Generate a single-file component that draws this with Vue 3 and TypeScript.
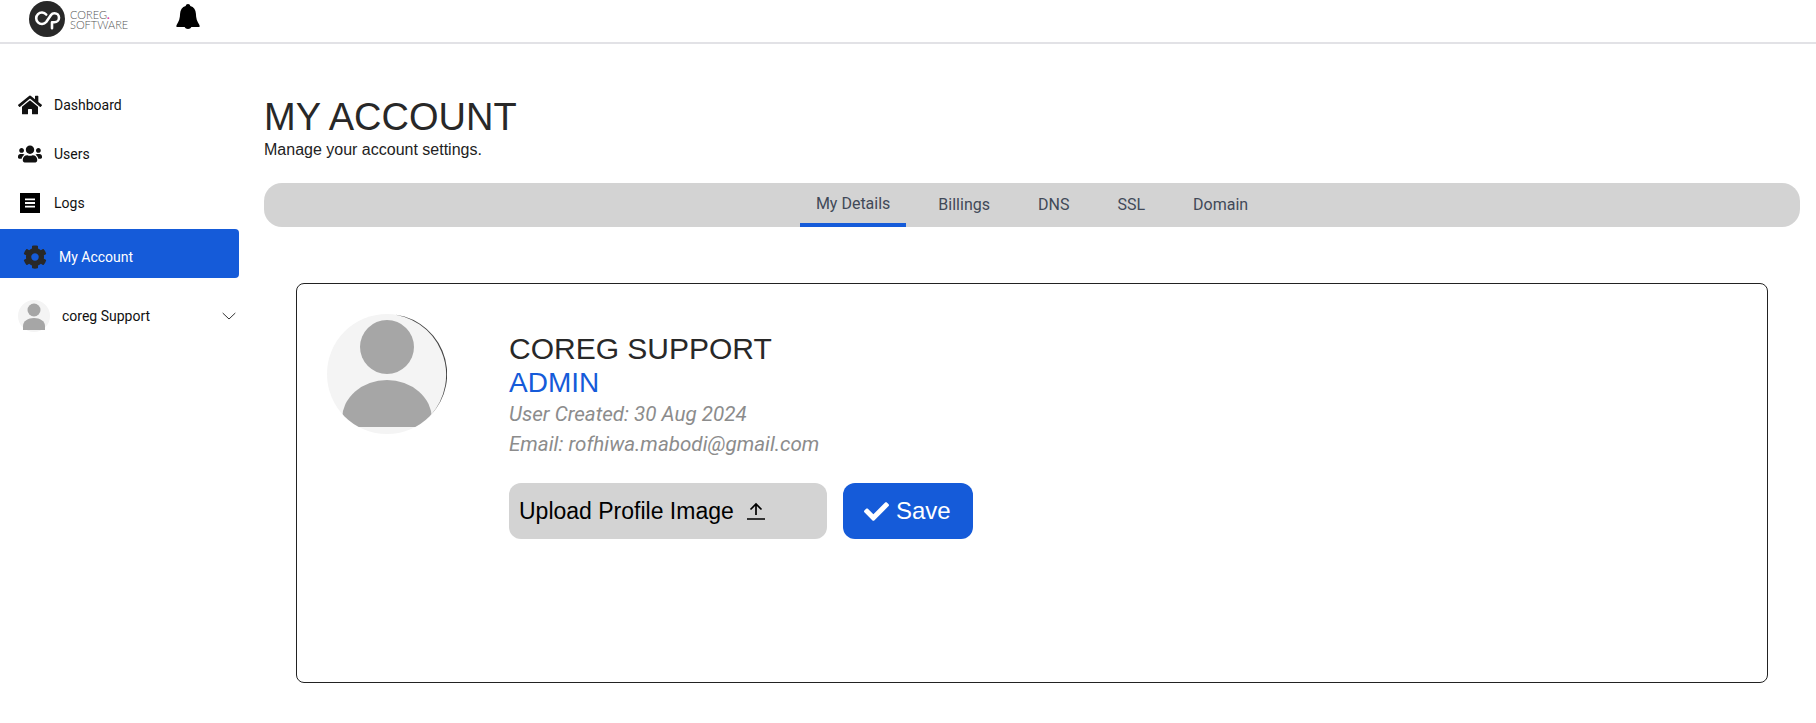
<script setup lang="ts">
import { ref } from "vue";

const navItems = [
  {
    label: "Dashboard",
    box: "0 0 576 512",
    d: "M280.37 148.26L96 300.11V464a16 16 0 0 0 16 16l112.06-.29a16 16 0 0 0 15.92-16V368a16 16 0 0 1 16-16h64a16 16 0 0 1 16 16v95.64a16 16 0 0 0 16 16.05L464 480a16 16 0 0 0 16-16V300L295.67 148.26a12.19 12.19 0 0 0-15.3 0zM571.6 251.47L488 182.56V44.05a12 12 0 0 0-12-12h-56a12 12 0 0 0-12 12v72.61L318.47 43a48 48 0 0 0-61 0L4.34 251.47a12 12 0 0 0-1.6 16.9l25.5 31A12 12 0 0 0 45.15 301l235.22-193.74a12.19 12.19 0 0 1 15.3 0L530.9 301a12 12 0 0 0 16.9-1.6l25.5-31a12 12 0 0 0-1.7-16.93z",
  },
  {
    label: "Users",
    box: "0 0 640 512",
    d: "M96 224c35.3 0 64-28.7 64-64s-28.7-64-64-64-64 28.7-64 64 28.7 64 64 64zm448 0c35.3 0 64-28.7 64-64s-28.7-64-64-64-64 28.7-64 64 28.7 64 64 64zm32 32h-64c-17.6 0-33.5 7.1-45.1 18.6 40.3 22.1 68.9 62 75.1 109.4h66c17.7 0 32-14.3 32-32v-32c0-35.3-28.7-64-64-64zm-256 0c61.9 0 112-50.1 112-112S381.9 32 320 32 208 82.1 208 144s50.1 112 112 112zm76.8 32h-8.3c-20.8 10-43.9 16-68.5 16s-47.6-6-68.5-16h-8.3C179.6 288 128 339.6 128 403.2V432c0 26.5 21.5 48 48 48h288c26.5 0 48-21.5 48-48v-28.8c0-63.6-51.6-115.2-115.2-115.2zm-223.7-13.4C161.5 263.1 145.6 256 128 256H64c-35.3 0-64 28.7-64 64v32c0 17.7 14.3 32 32 32h65.9c6.3-47.4 34.9-87.3 75.2-109.4z",
  },
  {
    label: "Logs",
    box: "0 0 20 20",
    d: "M0 0h20v20H0zM5 5.5v1.8h10V5.500zM5 9.100v1.800h10V9.100zM5 12.700v1.800h10v-1.800z",
  },
];

const gearPath =
  "M487.4 315.7l-42.6-24.6c4.3-23.2 4.3-47 0-70.2l42.6-24.6c4.9-2.8 7.1-8.6 5.5-14-11.1-35.6-30-67.8-54.7-94.6-3.8-4.1-10-5.1-14.8-2.3L380.8 110c-17.9-15.4-38.5-27.3-60.8-35.1V25.8c0-5.6-3.9-10.5-9.4-11.7-36.7-8.2-74.3-7.8-109.2 0-5.5 1.2-9.4 6.1-9.4 11.7V75c-22.2 7.9-42.8 19.8-60.8 35.1L88.7 85.5c-4.9-2.8-11-1.9-14.8 2.3-24.7 26.7-43.6 58.9-54.7 94.6-1.7 5.4.6 11.2 5.5 14L67.3 221c-4.3 23.2-4.3 47 0 70.2l-42.6 24.6c-4.9 2.8-7.1 8.6-5.5 14 11.1 35.6 30 67.8 54.7 94.6 3.8 4.1 10 5.1 14.8 2.3l42.6-24.6c17.9 15.4 38.5 27.3 60.8 35.1v49.2c0 5.6 3.9 10.5 9.4 11.7 36.7 8.2 74.3 7.8 109.2 0 5.5-1.2 9.4-6.1 9.4-11.7v-49.2c22.2-7.9 42.8-19.8 60.8-35.1l42.6 24.6c4.9 2.8 11 1.9 14.8-2.3 24.7-26.7 43.6-58.9 54.7-94.6 1.5-5.5-.7-11.3-5.6-14.1zM256 336c-44.1 0-80-35.9-80-80s35.9-80 80-80 80 35.9 80 80-35.9 80-80 80z";

const tabs = ["My Details", "Billings", "DNS", "SSL", "Domain"];
const activeTab = ref("My Details");
</script>

<template>
  <div class="page">
    <header class="topbar">
      <div class="logo">
        <svg class="logo__mark" viewBox="0 0 36 36" width="36" height="36">
          <circle cx="18" cy="18" r="18" fill="#282828" />
          <path
            d="M17.200 13.500a5.700 5.700 0 1 0 0 7.500l4.800-7a4.200 4.200 0 0 1 3.500-1.800 4.500 4.500 0 0 1 0 9h-2.500v6"
            fill="none"
            stroke="#fff"
            stroke-width="2.600"
            stroke-linecap="round"
            stroke-linejoin="round"
          />
        </svg>
        <div class="logo__text">
          <span>COREG<i>.</i></span>
          <span>SOFTWARE</span>
        </div>
      </div>
      <svg class="bell" viewBox="0 0 24 26" width="24" height="25">
        <path
          d="M12 0c1.400 0 2.200.8 2.400 2 3.800 1 5.600 4 5.800 8 .2 5 1 8 3.800 12v2h-8.500c-.5 1.200-2 2-3.500 2s-3-.8-3.500-2H0v-2c2.800-4 3.600-7 3.800-12 .2-4 2-7 5.800-8 .2-1.200 1-2 2.400-2z"
        />
      </svg>
    </header>

    <div class="layout">
      <aside class="sidebar">
        <a v-for="item in navItems" :key="item.label" class="nav-item">
          <span class="nav-item__icon">
            <svg :viewBox="item.box" :class="{ 'icon-logs': item.label === 'Logs' }" fill-rule="evenodd">
              <path :d="item.d" />
            </svg>
          </span>
          {{ item.label }}
        </a>
        <a class="nav-item nav-item--active">
          <svg class="gear" viewBox="0 0 512 512" width="24" height="24">
            <path :d="gearPath" />
          </svg>
          My Account
        </a>
        <div class="user-row">
          <svg class="user-row__avatar" viewBox="0 0 32 32" width="32" height="32">
            <circle cx="16" cy="16" r="16" fill="#f4f4f4" />
            <circle cx="16" cy="10" r="6.500" fill="#a6a6a6" />
            <path d="M5 30v-4c0-5 5-8 11-8s11 3 11 8v4z" fill="#a6a6a6" />
          </svg>
          <span class="user-row__name">coreg Support</span>
          <svg class="user-row__chevron" viewBox="0 0 14 8" width="14" height="8">
            <path d="M.7 1l6.300 6 6.300-6" fill="none" stroke="#333" stroke-width="1" />
          </svg>
        </div>
      </aside>

      <main class="content">
        <h1 class="title">MY ACCOUNT</h1>
        <p class="subtitle">Manage your account settings.</p>

        <nav class="tabs">
          <button
            v-for="tab in tabs"
            :key="tab"
            class="tab"
            :class="{ 'tab--active': tab === activeTab }"
            @click="activeTab = tab"
          >
            {{ tab }}
          </button>
        </nav>

        <section class="card">
          <svg class="avatar" viewBox="0 0 120 120" width="120" height="120">
            <defs>
              <clipPath id="avatar-body">
                <path d="M0 0h120v113H0z" />
              </clipPath>
              <clipPath id="avatar-circle">
                <circle cx="60" cy="60" r="60" />
              </clipPath>
            </defs>
            <circle cx="60" cy="60" r="60" fill="#f4f4f4" />
            <path d="M60 0A60 60 0 0 1 103 102A60.800 60.800 0 0 0 60 0z" fill="#444" />
            <circle cx="60" cy="33" r="27" fill="#a6a6a6" />
            <g clip-path="url(#avatar-circle)">
              <ellipse cx="60" cy="105" rx="45" ry="39" fill="#a6a6a6" clip-path="url(#avatar-body)" />
            </g>
          </svg>
          <div class="details">
            <h2 class="details__name">COREG SUPPORT</h2>
            <div class="details__role">ADMIN</div>
            <div class="details__meta">User Created: 30 Aug 2024</div>
            <div class="details__meta">Email: rofhiwa.mabodi@gmail.com</div>
            <div class="actions">
              <button class="btn btn--upload">
                Upload Profile Image
                <svg viewBox="0 0 18 18" width="18" height="18">
                  <path d="M9 13V2M3.500 7.500L9 2l5.500 5.500M0 17h18" fill="none" stroke="#000" stroke-width="1.700" />
                </svg>
              </button>
              <button class="btn btn--save">
                <svg viewBox="0 0 512 512" width="25" height="25" fill="#fff">
                  <path
                    d="M173.898 439.404l-166.400-166.400c-9.997-9.997-9.997-26.206 0-36.204l36.203-36.204c9.997-9.998 26.207-9.998 36.204 0L192 312.690 432.095 72.596c9.997-9.997 26.207-9.997 36.204 0l36.203 36.204c9.997 9.997 9.997 26.206 0 36.204l-294.400 294.401c-9.998 9.997-26.207 9.997-36.204-.001z"
                  />
                </svg>
                Save
              </button>
            </div>
          </div>
        </section>
      </main>
    </div>
  </div>
</template>

<style>
html,
body {
  margin: 0;
  background: #fff;
}
</style>

<style scoped>
.page {
  font-family: Roboto, "Liberation Sans", sans-serif;
  color: #000;
}

.topbar {
  display: flex;
  align-items: flex-start;
  height: 42px;
  border-bottom: 2px solid #e2e2e6;
  padding-left: 29px;
}
.logo {
  display: flex;
  align-items: center;
  margin-top: 1px;
  width: 147px;
}
.logo__mark {
  flex: none;
}
.logo__text {
  display: flex;
  flex-direction: column;
  margin-left: 5px;
  margin-top: 1px;
  font-family: Lato, sans-serif;
  font-weight: 300;
  font-size: 11px;
  line-height: 10px;
  color: #555;
}
.logo__text i {
  color: #e0309a;
  font-style: normal;
  font-weight: 700;
}
.bell {
  margin-top: 4px;
}

.layout {
  display: flex;
}
.sidebar {
  flex: none;
  width: 240px;
  padding-top: 36px;
}
.nav-item {
  display: flex;
  align-items: center;
  height: 49px;
  padding-left: 18px;
  font-size: 14px;
  color: #111;
}
.nav-item__icon {
  display: flex;
  justify-content: center;
  width: 24px;
  margin-right: 12px;
}
.nav-item__icon svg {
  width: 24px;
  height: 22px;
  fill: #111;
}
.nav-item__icon svg.icon-logs {
  width: 20px;
  height: 20px;
  fill: #000;
}
.nav-item--active {
  box-sizing: border-box;
  height: 49px;
  margin: 2px 1px 0 0;
  padding: 6px 0 0 23px;
  color: #fff;
  background: #155bd9;
  border-radius: 0 4px 4px 0;
}
.gear {
  margin-right: 12px;
  fill: #282828;
}
.user-row {
  display: flex;
  align-items: center;
  height: 48px;
  margin-top: 14px;
  padding-left: 18px;
  font-size: 14px;
  color: #111;
}
.user-row__name {
  margin-left: 12px;
}
.user-row__chevron {
  margin-left: auto;
  margin-right: 4px;
}

.content {
  flex: 1;
  min-width: 0;
  padding: 0 16px 0 24px;
}
.title {
  margin: 50px 0 0;
  font-family: "Liberation Sans", sans-serif;
  font-weight: 400;
  font-size: 38px;
  line-height: 46px;
  color: #282828;
}
.subtitle {
  margin: 0;
  font-family: "Liberation Sans", sans-serif;
  font-size: 16px;
  line-height: 19px;
  color: #222;
}
.tabs {
  display: flex;
  justify-content: center;
  gap: 16px;
  height: 44px;
  margin-top: 24px;
  background: #d3d3d3;
  border-radius: 18px;
}
.tab {
  padding: 0 16px 2px;
  border: 0;
  background: none;
  font-family: Roboto, sans-serif;
  font-weight: 400;
  font-size: 16px;
  color: #414958;
}
.tab--active {
  padding-bottom: 0;
  border-bottom: 4px solid #155bd9;
}

.card {
  display: flex;
  height: 400px;
  box-sizing: border-box;
  margin: 56px 32px 0;
  padding: 30px;
  border: 1px solid #222;
  border-radius: 8px;
}
.avatar {
  flex: none;
  margin-right: 62px;
}
.details {
  padding-top: 17px;
}
.details__name {
  margin: 0;
  font-family: "Liberation Sans", sans-serif;
  font-weight: 400;
  font-size: 30px;
  line-height: 35px;
  color: #282828;
}
.details__role {
  font-family: "Liberation Sans", sans-serif;
  font-size: 28px;
  line-height: 33px;
  color: #155bd9;
}
.details__meta {
  font-style: italic;
  font-size: 20.6px;
  line-height: 30px;
  color: #8c8c8c;
}
.actions {
  display: flex;
  gap: 16px;
  margin-top: 24px;
}
.btn {
  display: flex;
  align-items: center;
  height: 56px;
  border: 0;
  border-radius: 12px;
  font-family: "Liberation Sans", sans-serif;
  font-size: 24px;
}
.btn--upload {
  width: 318px;
  padding: 0 0 0 10px;
  gap: 13px;
  background: #d3d3d3;
  color: #000;
  font-size: 23px;
}
.btn--save {
  width: 130px;
  padding: 0 0 0 21px;
  gap: 7px;
  background: #155bd9;
  color: #fff;
}
</style>
